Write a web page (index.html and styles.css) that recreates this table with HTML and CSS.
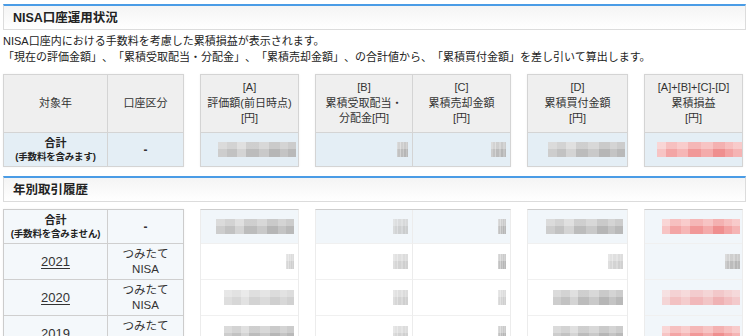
FILE: index.html
```html
<!DOCTYPE html>
<html lang="ja">
<head>
<meta charset="utf-8">
<title>NISA口座運用状況</title>
<link rel="stylesheet" href="styles.css">
</head>
<body>
<div class="page">
  <h2 class="sec-title">NISA口座運用状況</h2>
  <p class="desc">NISA口座内における手数料を考慮した累積損益が表示されます。<br>「現在の評価金額」、「累積受取配当・分配金」、「累積売却金額」、の合計値から、「累積買付金額」を差し引いて算出します。</p>

  <div class="blocks summary">
    <div class="block b1">
      <div class="hc">対象年</div>
      <div class="hc">口座区分</div>
      <div class="dc sum"><span class="sum-main">合計</span><span class="sum-sub">(手数料を含みます)</span></div>
      <div class="dc sum"><b>-</b></div>
    </div>
    <div class="block b2">
      <div class="hc">[A]<br>評価額(前日時点)<br>[円]</div>
      <div class="dc val"><span class="mz g w78"></span></div>
    </div>
    <div class="block b3">
      <div class="hc">[B]<br>累積受取配当・<br>分配金[円]</div>
      <div class="hc">[C]<br>累積売却金額<br>[円]</div>
      <div class="dc val"><span class="mz g w11 pr4"></span></div>
      <div class="dc val"><span class="mz g w15"></span></div>
    </div>
    <div class="block b2">
      <div class="hc">[D]<br>累積買付金額<br>[円]</div>
      <div class="dc val"><span class="mz g w77"></span></div>
    </div>
    <div class="block b2">
      <div class="hc">[A]+[B]+[C]-[D]<br>累積損益<br>[円]</div>
      <div class="dc val"><span class="mz p w85 pr0"></span></div>
    </div>
  </div>

  <h2 class="sec-title second">年別取引履歴</h2>

  <div class="blocks history">
    <div class="block b1 hist-left">
      <div class="rc first"><span class="sum-main">合計</span><span class="sum-sub">(手数料を含みません)</span></div>
      <div class="rc first"><b>-</b></div>
      <div class="rc"><a href="#" class="year">2021</a></div>
      <div class="rc kind">つみたて<br>NISA</div>
      <div class="rc"><a href="#" class="year">2020</a></div>
      <div class="rc kind">つみたて<br>NISA</div>
      <div class="rc"><a href="#" class="year">2019</a></div>
      <div class="rc kind">つみたて<br>NISA</div>
    </div>
    <div class="block b2 hv">
      <div class="vc first"><span class="mz g w78"></span></div>
      <div class="vc"><span class="mz g w8 lite"></span></div>
      <div class="vc"><span class="mz g w70 lite"></span></div>
      <div class="vc"><span class="mz g w70"></span></div>
    </div>
    <div class="block b3 hv">
      <div class="vc first"><span class="mz g w15 lite"></span></div>
      <div class="vc first"><span class="mz g w8"></span></div>
      <div class="vc"><span class="mz g w15 lite"></span></div>
      <div class="vc"><span class="mz g w8"></span></div>
      <div class="vc"><span class="mz g w15 lite"></span></div>
      <div class="vc"><span class="mz g w8 lite"></span></div>
      <div class="vc"><span class="mz g w15 lite"></span></div>
      <div class="vc"><span class="mz g w8"></span></div>
    </div>
    <div class="block b2 hv">
      <div class="vc first"><span class="mz g w77"></span></div>
      <div class="vc"><span class="mz g w15 lite"></span></div>
      <div class="vc"><span class="mz g w70"></span></div>
      <div class="vc"><span class="mz g w70"></span></div>
    </div>
    <div class="block b2 hv blue">
      <div class="vc first"><span class="mz p w78 pr0"></span></div>
      <div class="vc"><span class="mz g w15 pr0"></span></div>
      <div class="vc"><span class="mz p w78 pr0 lite"></span></div>
      <div class="vc"><span class="mz p w78 pr0"></span></div>
    </div>
  </div>
</div>
</body>
</html>
```

FILE: styles.css
```css
* { box-sizing: border-box; }

html, body {
  margin: 0;
  padding: 0;
  background: #fff;
}

body {
  font-family: "Liberation Sans", "Noto Sans CJK JP", sans-serif;
  color: #333;
  font-size: 11px;
  text-spacing-trim: space-all;
}

.page {
  padding: 4px 4px 0 3px;
}

.sec-title {
  margin: 0;
  height: 26px;
  border: 1px solid #dcdcdc;
  border-top: 2px solid #4a9ce6;
  background: linear-gradient(to bottom, #f4f4f4, #ffffff);
  padding: 0 0 0 9px;
  font-size: 12.5px;
  font-weight: bold;
  color: #222;
  line-height: 24px;
}

.sec-title.second {
  margin-top: 9px;
}

.desc {
  margin: 3px 0 9px 0;
  font-size: 11px;
  line-height: 16px;
  color: #222;
}

.blocks {
  display: grid;
  grid-template-columns: 181px 99px 196px 101px 99px;
  column-gap: 16px;
  width: 740px;
  align-items: start;
}

.history {
  margin-top: 7px;
}

.block {
  display: grid;
  border: 1px solid #d4d4d4;
  box-shadow: 0 0 2px rgba(0, 0, 0, 0.06);
}

.b1 { grid-template-columns: 104px 1fr; }
.b2 { grid-template-columns: 1fr; }
.b3 { grid-template-columns: 1fr 1fr; }

/* summary header cells */
.hc {
  height: 57px;
  background: #efefef;
  display: flex;
  align-items: center;
  justify-content: center;
  text-align: center;
  line-height: 15.5px;
  font-size: 11px;
  color: #333;
}

.b1 .hc:first-child,
.b3 .hc:first-child {
  border-right: 1px solid #d4d4d4;
}

.dc {
  height: 34px;
  border-top: 1px solid #d4d4d4;
  background: #e4eef5;
  display: flex;
  align-items: center;
}

.dc.sum {
  flex-direction: column;
  justify-content: center;
  text-align: center;
}

.b1 .dc.sum:nth-child(3),
.b3 .dc:nth-child(3) {
  border-right: 1px solid #d4d4d4;
}

.dc.val {
  justify-content: flex-end;
  padding-right: 2px;
}

.b3 .dc.val { padding-right: 4px; }

.sum-main {
  font-weight: bold;
  font-size: 11px;
  line-height: 14px;
  color: #222;
}

.sum-sub {
  font-weight: bold;
  font-size: 9.5px;
  line-height: 14px;
  color: #222;
  letter-spacing: -0.2px;
}

.dc.sum b, .rc b {
  font-size: 12px;
  color: #333;
}

/* history left block */
.hist-left {
  border-color: #cccccc;
}

.rc {
  height: 36px;
  border-top: 1px solid #cfcfcf;
  background: #f4f8fb;
  display: flex;
  flex-direction: column;
  align-items: center;
  justify-content: center;
  text-align: center;
}

.rc.first {
  height: 33px;
  border-top: 0;
}

.rc:nth-child(odd) {
  border-right: 1px solid #cfcfcf;
}

.year {
  color: #333;
  font-size: 13px;
  text-decoration: underline;
  text-underline-offset: 2px;
}

.kind {
  font-size: 11.5px;
  line-height: 15px;
  color: #333;
}

/* history value blocks */
.hv {
  border: 1px solid #ececec;
  border-top-color: #cdcdcd;
  box-shadow: none;
}

.vc {
  height: 36px;
  border-top: 1px solid #f0f0f0;
  background: #fff;
  display: flex;
  align-items: center;
  justify-content: flex-end;
  padding-right: 4px;
}

.vc.first {
  height: 33px;
  border-top: 0;
  background: #f1f6fa;
}

.b3.hv .vc:nth-child(odd) {
  border-right: 1px solid #ececec;
}

.hv.blue .vc {
  background: #f1f6fa;
}

/* pixelated (censored) values */
.mz {
  display: inline-block;
  height: 15px;
}

.mz.g {
  background:
    linear-gradient(to bottom, rgba(255, 255, 255, 0.28) 0 50%, rgba(255, 255, 255, 0) 50%),
    linear-gradient(to right, #cdcdcd 0 12%, #c2c2c2 12% 24%, #d4d4d4 24% 36%, #bcbcbc 36% 52%, #c9c9c9 52% 66%, #b6b6b6 66% 80%, #c4c4c4 80% 90%, #b9b9b9 90%);
}

.mz.p {
  background:
    linear-gradient(to bottom, rgba(255, 255, 255, 0.3) 0 50%, rgba(255, 255, 255, 0) 50%),
    linear-gradient(to right, #f7c4c4 0 10%, #f3a5a5 10% 24%, #f6b6b6 24% 36%, #f19898 36% 52%, #f4abab 52% 66%, #ef8f8f 66% 80%, #f3a3a3 80% 90%, #f5b4b4 90%);
}

.mz.lite { opacity: 0.65; }

.w8 { width: 8px; }
.w11 { width: 11px; }
.w15 { width: 15px; }
.w70 { width: 70px; }
.w77 { width: 77px; }
.w78 { width: 78px; }
.w85 { width: 85px; }

.pr0 { margin-right: -2px; }
.pr4 { margin-right: 0; }
```
